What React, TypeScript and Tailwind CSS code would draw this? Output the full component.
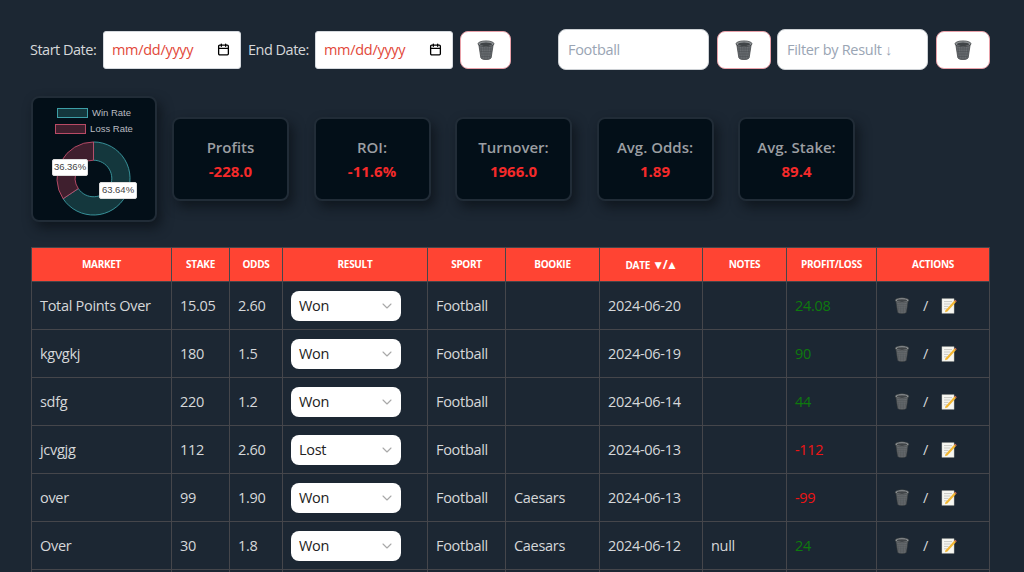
import type { ReactNode } from "react";
import { Calendar, ChevronDown } from "lucide-react";

interface Bet {
  market: string;
  stake: string;
  odds: string;
  result: string;
  sport: string;
  bookie: string;
  date: string;
  notes: string;
  profit: string;
}

const bets: Bet[] = [
  { market: "Total Points Over", stake: "15.05", odds: "2.60", result: "Won", sport: "Football", bookie: "", date: "2024-06-20", notes: "", profit: "24.08" },
  { market: "kgvgkj", stake: "180", odds: "1.5", result: "Won", sport: "Football", bookie: "", date: "2024-06-19", notes: "", profit: "90" },
  { market: "sdfg", stake: "220", odds: "1.2", result: "Won", sport: "Football", bookie: "", date: "2024-06-14", notes: "", profit: "44" },
  { market: "jcvgjg", stake: "112", odds: "2.60", result: "Lost", sport: "Football", bookie: "", date: "2024-06-13", notes: "", profit: "-112" },
  { market: "over", stake: "99", odds: "1.90", result: "Won", sport: "Football", bookie: "Caesars", date: "2024-06-13", notes: "", profit: "-99" },
  { market: "Over", stake: "30", odds: "1.8", result: "Won", sport: "Football", bookie: "Caesars", date: "2024-06-12", notes: "null", profit: "24" },
];

const stats = [
  { label: "Profits", value: "-228.0" },
  { label: "ROI:", value: "-11.6%" },
  { label: "Turnover:", value: "1966.0" },
  { label: "Avg. Odds:", value: "1.89" },
  { label: "Avg. Stake:", value: "89.4" },
];

const TrashIcon = ({ className }: { className: string }) => (
  <svg viewBox="0 0 18 20" className={className}>
    <path d="M1.8 4.5 L3.8 17.6 Q4.2 19.6 9 19.6 Q13.8 19.6 14.2 17.6 L16.2 4.5 Z" fill="#6b6f73" stroke="#33373a" strokeWidth="0.7" />
    <path d="M4 7 L5.4 18 M6.6 7 L7.4 19 M9 7 V19 M11.4 7 L10.6 19 M14 7 L12.6 18 M3 9 H15 M3.4 11.5 H14.6 M3.8 14 H14.2 M4.2 16.5 H13.8" stroke="#4a4e52" strokeWidth="0.5" fill="none" />
    <ellipse cx="9" cy="3.8" rx="8" ry="2.9" fill="#8d9194" stroke="#33373a" strokeWidth="0.7" />
    <ellipse cx="9" cy="4.2" rx="6" ry="1.7" fill="#404447" />
  </svg>
);

const MemoIcon = () => (
  <svg viewBox="0 0 16 16" className="w-[16px] h-[16px]">
    <rect x="1" y="0.8" width="12" height="14.4" fill="#f7f7f2" stroke="#c9c9c2" strokeWidth="0.5" />
    <path d="M3 3.6 H11 M3 6 H9.5 M3 8.4 H7.5 M3 10.8 H6" stroke="#b5b5b0" strokeWidth="0.7" />
    <path d="M4.6 12.2 L13.4 2.6 L15 4.1 L6.4 13.5 L4 14.2 Z" fill="#f2b632" />
    <path d="M13.4 2.6 L14.2 1.8 L15.8 3.2 L15 4.1 Z" fill="#e0705a" />
  </svg>
);

const ClearButton = ({ className }: { className: string }) => (
  <button className={`h-[38px] rounded-lg bg-white border border-[#e8a0a8] flex items-center justify-center ${className}`}>
    <TrashIcon className="w-[18px] h-[20px]" />
  </button>
);

const DateField = () => (
  <div className="w-[138px] h-[38px] bg-white rounded-[3px] border border-[#d5d9de] pl-[8px] pr-[10px] flex items-center justify-between text-[#e2483a] text-[14.5px]">
    <span>mm/dd/yyyy</span>
    <Calendar className="w-[13px] h-[13px] text-black" strokeWidth={2.4} />
  </div>
);

const WinLossChart = () => (
  <div className="relative w-[126px] h-[126px] shrink-0 rounded-lg bg-[#030f18] border-2 border-[#212c37] shadow-[4px_6px_12px_rgba(10,15,22,0.7)] font-['Liberation_Sans',sans-serif] tracking-normal text-[9.5px] text-[#b9bcc0]">
    <div className="flex flex-col items-center gap-[6px] pt-[10px]">
      <div className="flex items-center gap-[4px]">
        <span className="w-[31px] h-[10px] bg-[#14373d] border border-[#3d9ea6]" />
        <span className="leading-[10px]">Win Rate</span>
      </div>
      <div className="flex items-center gap-[4px]">
        <span className="w-[31px] h-[10px] bg-[#3f1f2e] border border-[#b84a65]" />
        <span className="leading-[10px]">Loss Rate</span>
      </div>
    </div>
    <svg viewBox="0 0 80 80" className="absolute left-[21px] top-[41px] w-[79px] h-[79px]">
      <path d="M40 3 A37 37 0 1 1 9.2 60.5 L24.6 50.2 A18.5 18.5 0 1 0 40 21.5 Z" fill="#14373d" stroke="#3d9ea6" strokeWidth="0.9" />
      <path d="M9.2 60.5 A37 37 0 0 1 40 3 L40 21.5 A18.5 18.5 0 0 0 24.6 50.2 Z" fill="#3f1f2e" stroke="#c24f6c" strokeWidth="0.9" />
    </svg>
    <span className="absolute left-[19px] top-[61px] w-[36px] h-[17px] flex items-center justify-center rounded-[2px] bg-white border border-[#ddd] text-[#444]">36.36%</span>
    <span className="absolute left-[66px] top-[84px] w-[38px] h-[17px] flex items-center justify-center rounded-[2px] bg-white border border-[#ddd] text-[#444]">63.64%</span>
  </div>
);

const StatCard = ({ label, value }: { label: string; value: string }) => (
  <div className="w-[117px] h-[84px] rounded-lg bg-[#030f18] border-2 border-[#212c37] shadow-[4px_6px_12px_rgba(10,15,22,0.7)] flex flex-col items-center justify-center gap-[2px] tracking-normal">
    <span className="text-[15px] font-semibold text-[#9b9ea2]">{label}</span>
    <span className="text-[15px] font-bold text-[#f52a2a]">{value}</span>
  </div>
);

const Th = ({ children, className }: { children: ReactNode; className: string }) => (
  <th className={`h-[34px] border border-[#45464b] text-[10px] font-bold uppercase text-white text-center p-0 ${className}`}>{children}</th>
);

const Td = ({ children, className = "" }: { children?: ReactNode; className?: string }) => (
  <td className={`h-[48px] border border-[#45464b] px-[8px] py-0 ${className}`}>{children}</td>
);

const profitColor = (bet: Bet) => (bet.profit.startsWith("-") ? "text-[#f01414]" : "text-[#0e7a0e]");

export default function App() {
  return (
    <div className="w-[1024px] h-[572px] overflow-hidden bg-[#1c2733] text-[#d6d8da] text-[14.5px] whitespace-nowrap font-['Open_Sans','Noto_Sans',sans-serif] tracking-[-0.3px]">
      <div className="flex items-center pl-[30px] pt-[29px]">
        <span className="w-[73px] tracking-[-0.5px]">Start Date:</span>
        <DateField />
        <span className="w-[74px] pl-[7px] tracking-[-0.5px]">End Date:</span>
        <DateField />
        <ClearButton className="w-[51px] ml-[7px]" />
        <div className="ml-[47px] w-[151px] h-[41px] rounded-lg bg-white border border-[#ccd0d4] pl-[9px] flex items-center text-[#9aa5b4]">Football</div>
        <ClearButton className="w-[54px] ml-[8px]" />
        <div className="ml-[6px] w-[151px] h-[41px] rounded-lg bg-white border border-[#ccd0d4] pl-[9px] flex items-center text-[#9aa5b4]">Filter by Result ↓</div>
        <ClearButton className="w-[54px] ml-[8px]" />
      </div>

      <div className="flex items-center gap-[24.5px] pl-[31px] pt-[26px]">
        <div className="mr-[-9.5px]">
          <WinLossChart />
        </div>
        {stats.map((stat) => (
          <StatCard key={stat.label} label={stat.label} value={stat.value} />
        ))}
      </div>

      <table className="ml-[31px] mt-[25px] w-[958px] table-fixed border-collapse">
        <thead>
          <tr className="bg-[#ff4433]">
            <Th className="w-[140px]">Market</Th>
            <Th className="w-[58px]">Stake</Th>
            <Th className="w-[53px]">Odds</Th>
            <Th className="w-[145px]">Result</Th>
            <Th className="w-[78px]">Sport</Th>
            <Th className="w-[94px]">Bookie</Th>
            <Th className="w-[103px]">
              Date <span className="text-[12px] tracking-[-1.5px]">▼/▲</span>
            </Th>
            <Th className="w-[84px]">Notes</Th>
            <Th className="w-[90px]">Profit/Loss</Th>
            <Th className="w-[113px]">Actions</Th>
          </tr>
        </thead>
        <tbody>
          {bets.map((bet) => (
            <tr key={bet.market + bet.date}>
              <Td>{bet.market}</Td>
              <Td>{bet.stake}</Td>
              <Td>{bet.odds}</Td>
              <Td>
                <div className="w-[110px] h-[30px] rounded-lg bg-white text-[#222] pl-[8px] pr-[6px] flex items-center justify-between">
                  <span>{bet.result}</span>
                  <ChevronDown className="w-[16px] h-[16px] text-[#a8a8a8]" strokeWidth={1.6} />
                </div>
              </Td>
              <Td>{bet.sport}</Td>
              <Td>{bet.bookie}</Td>
              <Td>{bet.date}</Td>
              <Td>{bet.notes}</Td>
              <Td className={profitColor(bet)}>{bet.profit}</Td>
              <Td>
                <div className="flex items-center pl-[9px]">
                  <TrashIcon className="w-[16px] h-[17px]" />
                  <span className="ml-[13px] mr-[13px]">/</span>
                  <MemoIcon />
                </div>
              </Td>
            </tr>
          ))}
          <tr>
            {Array.from({ length: 10 }, (_, index) => (
              <Td key={index} />
            ))}
          </tr>
        </tbody>
      </table>
    </div>
  );
}
